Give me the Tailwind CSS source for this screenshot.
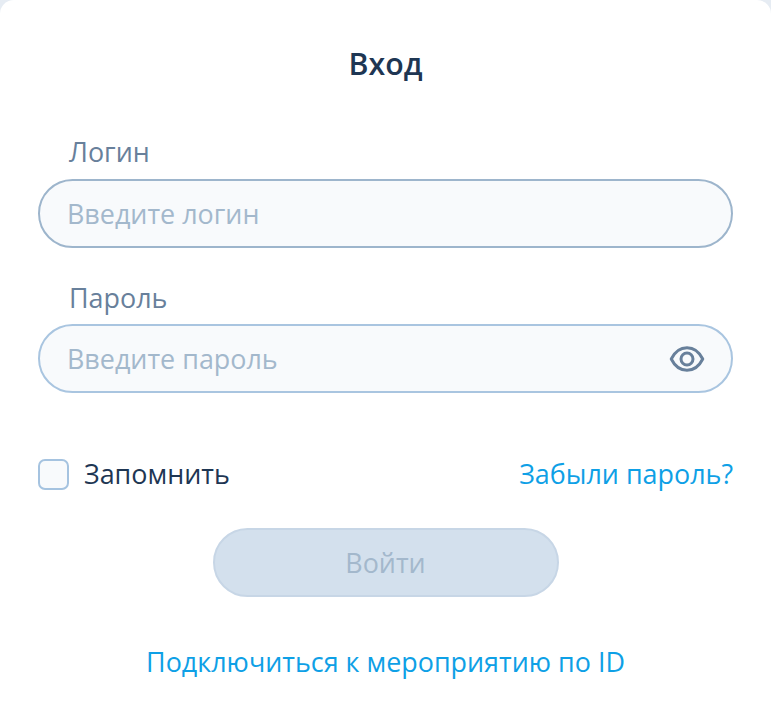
<!DOCTYPE html>
<html lang="ru">
<head>
    <meta charset="UTF-8">
    <title>Вход</title>
    <script src="https://cdn.jsdelivr.net/npm/@tailwindcss/browser@4"></script>
</head>
<body class="bg-[#e6ecf3] font-['Open_Sans',sans-serif]">
    <div class="w-[771px] h-[720px] overflow-hidden bg-white rounded-t-[14px] pl-[38px] pr-[38px] pt-[43px]">
        <h1 class="text-center text-[30.3px] leading-[42px] font-semibold text-[#1e3653]">Вход</h1>

        <label class="block mt-[49px] ml-[31px] text-[26.9px] leading-[36px] text-[#68809b]">Логин</label>
        <div class="mt-[9px] h-[69px] rounded-full border-2 border-[#9db5cc] bg-[#f8fafc] flex items-center px-[27px]">
            <span class="text-[26.9px] leading-[36px] text-[#a3b8cc]">Введите логин</span>
        </div>

        <label class="block mt-[32px] ml-[31px] text-[26.9px] leading-[36px] text-[#68809b]">Пароль</label>
        <div class="mt-[8px] h-[69px] rounded-full border-2 border-[#a9c5e0] bg-[#f8fafc] flex items-center justify-between pl-[27px] pr-[26px]">
            <span class="text-[26.9px] leading-[36px] text-[#a3b8cc]">Введите пароль</span>
            <svg class="w-[36px] h-[36px]" viewBox="0 0 24 24" fill="none" stroke="#68809b" stroke-width="2" stroke-linejoin="round">
                <path d="M1.500 12C4 7 7.800 4.500 12 4.500s8 2.500 10.500 7.500c-2.500 5-6.300 7.500-10.500 7.500s-8-2.500-10.500-7.500z"/>
                <circle cx="12" cy="12" r="4"/>
            </svg>
        </div>

        <div class="mt-[63px] flex items-center justify-between h-[36px]">
            <div class="flex items-center gap-[15px]">
                <div class="w-[31px] h-[31px] rounded-[7px] border-2 border-[#a5c3e0] bg-[#f8fafc]"></div>
                <span class="text-[26.9px] leading-[36px] text-[#1e3653]">Запомнить</span>
            </div>
            <a class="text-[26.9px] leading-[36px] text-[#0ea0e6]">Забыли пароль?</a>
        </div>

        <div class="mt-[36px] flex justify-center">
            <button class="w-[346px] h-[69px] rounded-full border-2 border-[#c7d6e6] bg-[#d3e0ed] text-[26.9px] leading-[36px] text-[#a3b8cc]">Войти</button>
        </div>

        <div class="mt-[47px] text-center">
            <a class="text-[26.9px] leading-[36px] text-[#0ea0e6]">Подключиться к мероприятию по ID</a>
        </div>
    </div>
</body>
</html>
